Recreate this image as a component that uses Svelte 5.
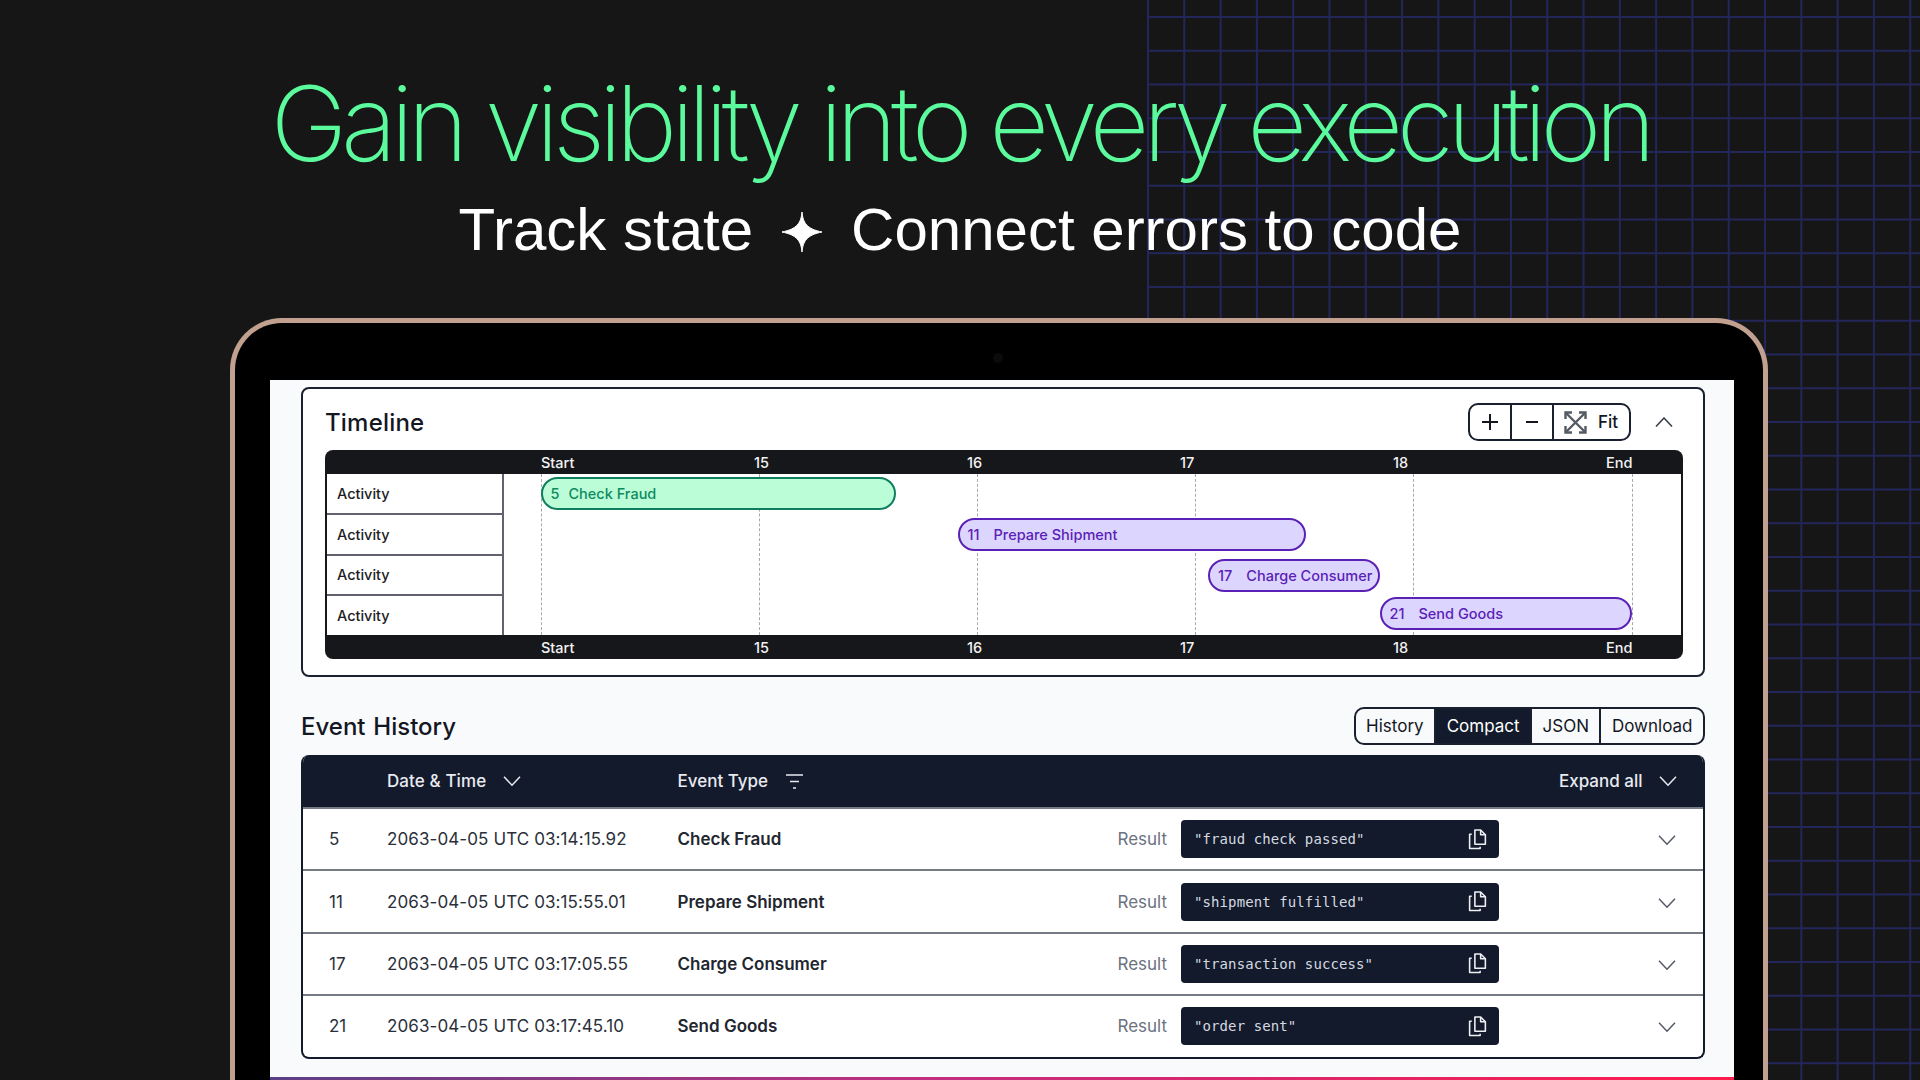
<script>
    const ticks = ["Start", "15", "16", "17", "18", "End"];
    const chartLeft = 505;
    const lines = [541.6, 759.8, 978, 1196.2, 1414.4, 1632.6];

    const bars = [
        { id: 5, name: "Check Fraud", x1: 541.5, x2: 896.5, top: 2.5, gap: 9, kind: "done" },
        { id: 11, name: "Prepare Shipment", x1: 958.5, x2: 1306.5, top: 43.5, gap: 14, kind: "run" },
        { id: 17, name: "Charge Consumer", x1: 1209, x2: 1380.5, top: 84.5, gap: 14, kind: "run" },
        { id: 21, name: "Send Goods", x1: 1380.5, x2: 1633, top: 123, gap: 14, kind: "run" }
    ];

    const events = [
        { id: 5, time: "2063-04-05 UTC 03:14:15.92", type: "Check Fraud", result: '"fraud check passed"' },
        { id: 11, time: "2063-04-05 UTC 03:15:55.01", type: "Prepare Shipment", result: '"shipment fulfilled"' },
        { id: 17, time: "2063-04-05 UTC 03:17:05.55", type: "Charge Consumer", result: '"transaction success"' },
        { id: 21, time: "2063-04-05 UTC 03:17:45.10", type: "Send Goods", result: '"order sent"' }
    ];

    const views = ["History", "Compact", "JSON", "Download"];
</script>

<div class="page">
    <div class="grid-bg"></div>

    <h1>Gain visibility into every execution</h1>
    <h2>
        <span>Track state</span>
        <svg class="star" width="40" height="40" viewBox="0 0 40 40"><path d="M20 0C21 11 25 17 40 20C25 23 21 29 20 40C19 29 15 23 0 20C15 17 19 11 20 0Z" fill="currentColor" stroke="currentColor" stroke-width="1"/></svg>
        <span>Connect errors to code</span>
    </h2>

    <div class="laptop">
        <div class="camera"></div>
        <div class="screen">
            <section class="timeline">
                <div class="timeline-head">
                    <h3>Timeline</h3>
                    <div class="zoom-tools">
                        <div class="zoom-btn">
                            <svg width="18" height="18" viewBox="0 0 18 18" fill="none" stroke="currentColor" stroke-width="2"><path d="M9 1v16M1 9h16"/></svg>
                        </div>
                        <div class="zoom-btn">
                            <svg width="14" height="14" viewBox="0 0 14 14" fill="none" stroke="currentColor" stroke-width="2"><path d="M1 7h12"/></svg>
                        </div>
                        <div class="zoom-btn fit">
                            <svg width="23" height="23" viewBox="0 0 23 23" fill="none" stroke="#555a63" stroke-width="2.4"><path d="M2 2l19 19M21 2L2 21"/><path d="M1.5 8V1.5H8M15 1.5h6.5V8M21.5 15v6.5H15M8 21.5H1.5V15"/></svg>
                            <span>Fit</span>
                        </div>
                    </div>
                    <svg class="collapse" width="18" height="10" viewBox="0 0 18 10" fill="none" stroke="#333a45" stroke-width="1.5"><path d="M1 9.5l8-8.5 8 8.5"/></svg>
                </div>

                <div class="gantt">
                    <div class="axis top">
                        {#each ticks as t}<span>{t}</span>{/each}
                    </div>
                    <div class="gantt-body">
                        <div class="labels">
                            {#each bars as b}<div class="label">Activity</div>{/each}
                        </div>
                        <div class="chart">
                            {#each lines as x}
                                <div class="tick-line" style="left: {x - chartLeft}px"></div>
                            {/each}
                            {#each bars as b}
                                <div class="bar {b.kind}" style="left: {b.x1 - chartLeft}px; width: {b.x2 - b.x1}px; top: {b.top}px">
                                    <span style="margin-right: {b.gap}px">{b.id}</span>{b.name}
                                </div>
                            {/each}
                        </div>
                    </div>
                    <div class="axis bottom">
                        {#each ticks as t}<span>{t}</span>{/each}
                    </div>
                </div>
            </section>

            <div class="events-head">
                <h3 class="events-title">Event&nbsp; History</h3>
                <div class="views">
                    {#each views as v}
                        <div class="view" class:active={v === "Compact"}>{v}</div>
                    {/each}
                </div>
            </div>

            <div class="table">
                <div class="row thead">
                    <div class="col-id"></div>
                    <div class="col-time">
                        Date &amp; Time
                        <svg class="caret" width="18" height="10" viewBox="0 0 18 10" fill="none" stroke="currentColor" stroke-width="1.5"><path d="M1 .8l8 8.4 8-8.4"/></svg>
                    </div>
                    <div class="col-type">
                        Event Type
                        <svg class="filter" width="17" height="15" viewBox="0 0 17 15" fill="none" stroke="currentColor" stroke-width="1.7"><path d="M0 1h17M4 7.5h9M7 14h3"/></svg>
                    </div>
                    <div class="expand">
                        Expand all
                        <svg class="caret" width="18" height="10" viewBox="0 0 18 10" fill="none" stroke="currentColor" stroke-width="1.5"><path d="M1 .8l8 8.4 8-8.4"/></svg>
                    </div>
                </div>
                {#each events as e}
                    <div class="row">
                        <div class="col-id">{e.id}</div>
                        <div class="col-time">{e.time}</div>
                        <div class="col-type strong">{e.type}</div>
                        <div class="result-label">Result</div>
                        <div class="code">
                            <code>{e.result}</code>
                            <svg width="19" height="21" viewBox="0 0 18 20" fill="none" stroke="currentColor" stroke-width="1.5" stroke-linejoin="round"><path d="M6.5 1h5.5l4.5 4.5V14.5H6.5Z"/><path d="M12 1v4.5h4.5"/><path d="M3.5 5H1.5V18.5H11.5V17"/></svg>
                        </div>
                        <svg class="row-caret" width="18" height="10" viewBox="0 0 18 10" fill="none" stroke="#555b66" stroke-width="1.5"><path d="M1 .8l8 8.4 8-8.4"/></svg>
                    </div>
                {/each}
            </div>
        </div>
    </div>
</div>

<style>
    :global(body) {
        margin: 0;
        background: #161616;
    }

    .page {
        position: relative;
        width: 1920px;
        height: 1080px;
        overflow: hidden;
        background: #161616;
        display: flex;
        flex-direction: column;
        font-family: Inter, sans-serif;
    }

    .grid-bg {
        position: absolute;
        top: 0;
        bottom: 0;
        left: 1147px;
        right: 0;
        background-image:
            linear-gradient(to right, #23265a 2px, transparent 2px),
            linear-gradient(to bottom, #23265a 2px, transparent 2px);
        background-size: 36.3px 33.75px;
        background-position: 0 16px;
    }

    h1 {
        position: relative;
        margin: 63px 0 0;
        font-family: Inter, sans-serif;
        font-size: 104px;
        font-weight: 250;
        line-height: 120px;
        letter-spacing: -6.4px;
        color: #5bfb9d;
        text-align: center;
        white-space: nowrap;
    }

    h2 {
        position: relative;
        margin: 14px 0 0;
        display: flex;
        justify-content: center;
        align-items: center;
        gap: 29px;
        font-family: "Liberation Sans", sans-serif;
        font-size: 60px;
        font-weight: 400;
        line-height: 66px;
        color: #fff;
        white-space: nowrap;
    }

    .star {
        margin-top: 4px;
    }

    .laptop {
        position: relative;
        box-sizing: border-box;
        width: 1538px;
        height: 800px;
        margin: 55px 0 0 230px;
        padding: 57px 29px 0 35px;
        flex-shrink: 0;
        background: #000;
        border: 5px solid #c2a08f;
        border-bottom: 0;
        border-radius: 52px 52px 0 0;
    }

    .camera {
        position: absolute;
        top: 30px;
        left: 758px;
        width: 10px;
        height: 10px;
        border-radius: 50%;
        background: #0b0b0d;
    }

    .screen {
        box-sizing: border-box;
        width: 1464px;
        height: 700px;
        padding: 7px 29px 0 31px;
        background: #f8fafc;
        border-bottom: 3px solid transparent;
        border-image: linear-gradient(to right, #5b3f86, #c22f80 45%, #ff1c4d 100%) 1;
        border-left: 0;
        border-right: 0;
        border-top: 0;
    }

    h3 {
        margin: 0;
        font-family: Inter, sans-serif;
        font-size: 24px;
        font-weight: 450;
        color: #14171f;
    }

    .events-title {
        word-spacing: -2.5px;
    }

    .timeline {
        box-sizing: border-box;
        height: 290px;
        padding: 10px 20px 0 22px;
        background: #fff;
        border: 2.5px solid #1a2030;
        border-radius: 8px;
    }

    .timeline-head {
        display: flex;
        align-items: center;
        height: 46px;
    }

    .timeline-head h3 {
        flex: 1;
        letter-spacing: 0.2px;
    }

    .zoom-tools {
        display: flex;
        height: 38px;
        box-sizing: border-box;
        border: 2px solid #1a2030;
        border-radius: 10px;
        color: #14171f;
    }

    .zoom-btn {
        width: 40px;
        display: flex;
        align-items: center;
        justify-content: center;
        border-right: 2px solid #1a2030;
    }

    .zoom-btn.fit {
        width: 75px;
        gap: 11px;
        border-right: 0;
        font-size: 17px;
        font-weight: 500;
        justify-content: flex-start;
        padding-left: 10px;
        box-sizing: border-box;
    }

    .collapse {
        margin: 0 10px 0 24px;
    }

    .gantt {
        margin-top: 5px;
        border-radius: 8px;
        overflow: hidden;
    }

    .axis {
        box-sizing: border-box;
        height: 24px;
        padding-left: 216px;
        display: grid;
        grid-template-columns: repeat(5, 213px) auto;
        align-items: center;
        background: #16171a;
        color: #f2f2f2;
        font-size: 14.5px;
        font-weight: 500;
    }

    .gantt-body {
        display: flex;
        height: 161px;
        background: #fff;
        border-left: 2px solid #16171a;
        border-right: 2px solid #16171a;
    }

    .labels {
        box-sizing: border-box;
        width: 177px;
        flex-shrink: 0;
        border-right: 2px solid #62626e;
        display: flex;
        flex-direction: column;
    }

    .label {
        flex: 1;
        display: flex;
        align-items: center;
        padding-left: 10px;
        font-size: 14.5px;
        font-weight: 500;
        color: #1c1c22;
        border-bottom: 2px solid #62626e;
    }

    .label:last-child {
        border-bottom: 0;
    }

    .chart {
        position: relative;
        flex: 1;
    }

    .tick-line {
        position: absolute;
        top: 0;
        bottom: 0;
        border-left: 1px dashed #a8a8ae;
    }

    .bar {
        position: absolute;
        box-sizing: border-box;
        height: 33px;
        padding-left: 8px;
        display: flex;
        align-items: center;
        border: 2px solid;
        border-radius: 17px;
        font-size: 14.5px;
        font-weight: 500;
        white-space: nowrap;
    }

    .bar.done {
        background: #bbfdd7;
        border-color: #0f7d5e;
        color: #0e8a5f;
    }

    .bar.run {
        background: #dcd6fe;
        border-color: #5b21b6;
        color: #5b21b6;
    }

    .events-head {
        display: flex;
        align-items: center;
        justify-content: space-between;
        height: 38px;
        margin-top: 30px;
    }

    .views {
        display: flex;
        height: 38px;
        box-sizing: border-box;
        border: 2px solid #1a2030;
        border-radius: 10px;
        overflow: hidden;
        font-size: 17px;
        color: #14171f;
    }

    .view {
        display: flex;
        align-items: center;
        padding: 0 10.5px;
        border-left: 2px solid #1a2030;
    }

    .view:first-child {
        border-left: 0;
    }

    .view.active {
        background: #131a2b;
        color: #fff;
    }

    .table {
        margin-top: 10px;
        box-sizing: border-box;
        border: 2.5px solid #131a2b;
        border-top: 0;
        border-radius: 8px;
        overflow: hidden;
        background: #fff;
    }

    .row {
        box-sizing: border-box;
        display: flex;
        align-items: center;
        height: 62.4px;
        border-top: 2px solid #777b84;
        font-size: 17px;
        color: #2a2f3a;
    }

    .row.thead {
        height: 52px;
        margin: 0 -2.5px;
        border-top: 0;
        background: #131a2b;
        color: #e8eaf0;
        font-weight: 500;
    }

    .col-id {
        width: 84px;
        padding-left: 26px;
        box-sizing: border-box;
        flex-shrink: 0;
    }

    .thead .col-id {
        width: 86.5px;
    }

    .col-time {
        width: 290.5px;
        flex-shrink: 0;
        display: flex;
        align-items: center;
        gap: 17px;
        letter-spacing: 0.1px;
    }

    .col-type {
        display: flex;
        align-items: center;
        gap: 18px;
    }

    .col-type.strong {
        flex: 1;
        font-weight: 600;
        color: #22262f;
    }

    .expand {
        margin-left: auto;
        margin-right: 29px;
        display: flex;
        align-items: center;
        gap: 16px;
    }

    .result-label {
        color: #6b7280;
        margin-right: 14px;
    }

    .code {
        box-sizing: border-box;
        width: 318px;
        height: 38px;
        padding: 0 12px 0 13px;
        display: flex;
        align-items: center;
        justify-content: space-between;
        background: #131a2b;
        border-radius: 4px;
        color: #d6d9e0;
    }

    code {
        font-family: "DejaVu Sans Mono", monospace;
        font-size: 14px;
        letter-spacing: 0.1px;
    }

    .code svg {
        color: #eef0f4;
    }

    .row-caret {
        margin: 2px 27px 0 159px;
    }
</style>
